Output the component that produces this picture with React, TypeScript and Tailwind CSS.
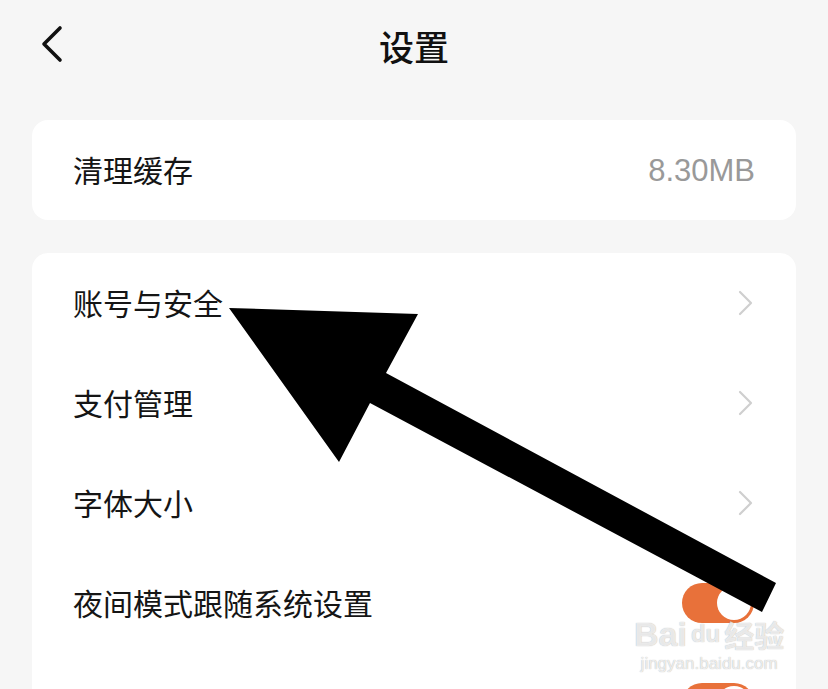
import React from "react";

const font = { fontFamily: '"Noto Sans CJK SC", "Noto Sans", sans-serif' };

function Chevron() {
  return (
    <svg width="16" height="26" viewBox="0 0 16 26" className="shrink-0">
      <polyline points="2,2 13,13 2,24" fill="none" stroke="#cfcfcf" strokeWidth="2.2" strokeLinecap="round" strokeLinejoin="round" />
    </svg>
  );
}

function Toggle() {
  return (
    <div className="w-[72px] h-[40px] rounded-full bg-[#e8713a] flex items-center justify-end pr-[3px]">
      <div className="w-[34px] h-[34px] rounded-full bg-white" />
    </div>
  );
}

function Row({ label, right }: { label: string; right: React.ReactNode }) {
  return (
    <div className="h-[100px] flex items-center justify-between pl-[41px] pr-[42px]">
      <span className="text-[30px] text-[#151515] leading-none -mt-[3px]">{label}</span>
      {right}
    </div>
  );
}

export default function App() {
  return (
    <div className="relative w-[828px] h-[689px] overflow-hidden bg-[#f6f6f6]" style={font}>
      <div className="h-[90px] relative flex items-center justify-center">
        <svg width="26" height="40" viewBox="0 0 26 40" className="absolute left-[38px] top-[24px]">
          <polyline points="22,4 6,20 22,36" fill="none" stroke="#111" strokeWidth="3.6" strokeLinecap="round" strokeLinejoin="round" />
        </svg>
        <span className="text-[35px] font-medium text-[#111] leading-none">设置</span>
      </div>
      <div className="px-8 pt-[30px] flex flex-col gap-[33px]">
        <div className="bg-white rounded-[16px] h-[100px] flex items-center justify-between pl-[41px] pr-[41px]">
          <span className="text-[30px] text-[#151515] leading-none -mt-[3px]">清理缓存</span>
          <span className="text-[31px] text-[#999999] leading-none" style={{ fontFamily: '"Liberation Sans", Arial, sans-serif' }}>8.30MB</span>
        </div>
        <div className="bg-white rounded-[16px] flex flex-col">
          <Row label="账号与安全" right={<Chevron />} />
          <Row label="支付管理" right={<Chevron />} />
          <Row label="字体大小" right={<Chevron />} />
          <Row label="夜间模式跟随系统设置" right={<Toggle />} />
          <Row label="非WiFi环境下自动播放视频" right={<Toggle />} />
        </div>
      </div>

      {/* watermark */}
      <div className="absolute left-[634px] top-[617px] flex flex-col items-center leading-none select-none" style={{ color: "rgba(255,255,255,0.75)", textShadow: "0 0 1px rgba(0,0,0,0.35)" }}>
        <div className="flex items-center text-[34px] font-bold" style={{ fontFamily: '"Liberation Sans", Arial, sans-serif' }}>
          <span>Bai</span>
          <span className="text-[24px] px-[4px] rounded-full">du</span>
          <span className="text-[30px]" style={font}>经验</span>
        </div>
        <div className="text-[17px] mt-[4px]" style={{ fontFamily: '"Liberation Sans", Arial, sans-serif' }}>jingyan.baidu.com</div>
      </div>

      {/* arrow overlay */}
      <svg className="absolute left-0 top-0 pointer-events-none" width="828" height="689" viewBox="0 0 828 689">
        <polygon points="229,308 418,314 386,373 776,583 762,612 370,403 339,462" fill="#000" />
      </svg>
    </div>
  );
}
